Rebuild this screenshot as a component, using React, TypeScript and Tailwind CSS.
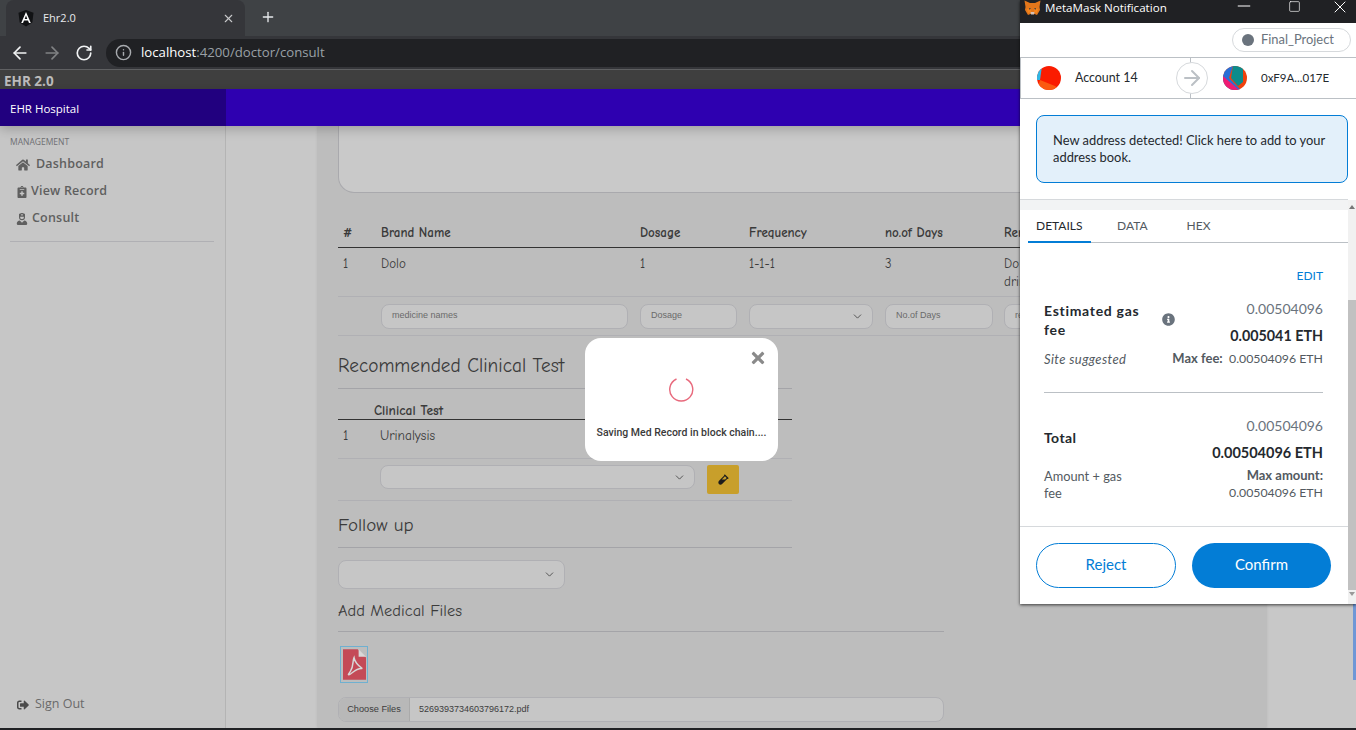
import { ArrowLeft, ArrowRight, ChevronDown, Info, Minus, Plus, RotateCw, Square, X } from 'lucide-react'
import { FaHome, FaInfoCircle, FaNotesMedical, FaSignOutAlt, FaTimes, FaUserNurse, FaVial } from 'react-icons/fa'

const comic = "font-['Comic_Sans_MS','Comic_Neue',cursive]"

function AngularLogo() {
  return (
    <svg width="16" height="17" viewBox="0 0 16 17">
      <path d="M8 0 L15.5 2.7 L14.3 12.6 L8 16.5 L1.7 12.6 L.5 2.7 Z" fill="#111214" />
      <path d="M8 2 L3.2 13 H5 L6 10.4 H10 L11 13 H12.8 Z M6.7 8.9 L8 5.6 L9.3 8.9 Z" fill="#fff" fillRule="evenodd" />
    </svg>
  )
}

function Fox() {
  return (
    <svg width="17" height="16" viewBox="0 0 17 16">
      <path d="M.5 .5 L6 3 H11 L16.5 .5 L15.5 7 L16 10 L13 15 L10.5 14 H6.5 L4 15 L1 10 L1.5 7 Z" fill="#e2761b" />
      <path d="M3 9 L6.5 8 L7 12 L4 13 Z M14 9 L10.5 8 L10 12 L13 13 Z" fill="#f6851b" />
      <path d="M6.5 12 H10.5 L10 14.5 H7 Z" fill="#d7c1b3" />
      <path d="M5 8 L7 8.6 L5.5 9.8 Z M12 8 L10 8.6 L11.5 9.8 Z" fill="#233447" />
    </svg>
  )
}

function FakeSelect({ className }: { className: string }) {
  return (
    <div className={`flex items-center justify-end pr-2 rounded-[8px] border border-[#b0b0b4] bg-[#c6c6c6] ${className}`}>
      <ChevronDown size={13} strokeWidth={1.6} color="#444" />
    </div>
  )
}

function FakeInput({ text }: { text: string }) {
  return (
    <div className="h-[25px] flex items-center pl-[10px] rounded-[8px] border border-[#b0b0b4] bg-[#c6c6c6] text-[9px] text-[#6a6a6a] font-['Liberation_Sans',sans-serif] overflow-hidden">
      {text}
    </div>
  )
}

function Sidebar() {
  const items = [
    { label: 'Dashboard', icon: <FaHome size={14} />, cls: 'gap-[6px]' },
    { label: 'View Record', icon: <FaNotesMedical size={12} />, cls: 'gap-[3px]' },
    { label: 'Consult', icon: <FaUserNurse size={12} />, cls: 'gap-[4px]' },
  ]
  return (
    <aside className="w-[226px] shrink-0 flex flex-col justify-between bg-[#c6c6c6] border-r border-[#b4b4b4] font-['Open_Sans',sans-serif]">
      <div className="pt-[10px]">
        <div className="pl-[10px] text-[8.5px] leading-[12px] text-[#6f6f73]">MANAGEMENT</div>
        <ul className="mt-[3px]">
          {items.map((it) => (
            <li key={it.label} className={`h-[27px] pl-[16px] flex items-center text-[#5f5f5f] text-[12.5px] font-semibold tracking-[0.2px] ${it.cls}`}>
              {it.icon}
              {it.label}
            </li>
          ))}
        </ul>
        <div className="mx-[10px] w-[204px] mt-[9px] border-t border-[#b0b0b4]" />
      </div>
      <div className="pl-[17px] pb-[14px] flex items-center gap-[6px] text-[12.5px] text-[#6a6a6a]">
        <FaSignOutAlt size={12} color="#4a4a4a" />
        Sign Out
      </div>
    </aside>
  )
}

function MedicineTable() {
  const cols = 'grid grid-cols-[43px_259px_109px_136px_119px_1fr]'
  return (
    <div className="mt-[28px] text-[#3b3b3b]">
      <div className={`${cols} h-[27px] pb-[2px] items-center border-b border-[#333] text-[13px] font-bold text-[#3a3a3a] ${comic}`}>
        <div className="pl-[5px] text-[13px]">#</div>
        <div>Brand Name</div>
        <div>Dosage</div>
        <div>Frequency</div>
        <div>no.of Days</div>
        <div>Remarks</div>
      </div>
      <div className={`${cols} h-[49px] pt-[7px] border-b border-[#b0b0b4] text-[13px] leading-[18px] ${comic}`}>
        <div className="pl-[5px]">1</div>
        <div>Dolo</div>
        <div>1</div>
        <div>1-1-1</div>
        <div>3</div>
        <div className="max-w-[110px]">Do not take after drinking</div>
      </div>
      <div className={`${cols} h-[39px] items-center border-b border-[#b0b0b4]`}>
        <div />
        <div className="pr-[12px]"><FakeInput text="medicine names" /></div>
        <div className="pr-[12px]"><FakeInput text="Dosage" /></div>
        <div className="pr-[12px]"><FakeSelect className="h-[25px]" /></div>
        <div className="pr-[11px]"><FakeInput text="No.of Days" /></div>
        <div className="pr-[12px]"><FakeInput text="remarks" /></div>
      </div>
    </div>
  )
}

function ClinicalTests() {
  return (
    <div className="w-[454px] text-[#3b3b3b]">
      <h2 className={`mt-[16px] h-[37px] leading-[28px] text-[19.3px] border-b border-[#a4a4a8] ${comic}`}>Recommended Clinical Test</h2>
      <div className={`h-[31px] pl-[36px] pt-[14px] leading-[16px] text-[13.5px] font-bold border-b border-[#333] ${comic}`}>Clinical Test</div>
      <div className={`h-[39px] flex items-center pb-[6px] border-b border-[#b0b0b4] text-[13.4px] ${comic}`}>
        <span className="w-[42px] pl-[5px]">1</span>
        Urinalysis
      </div>
      <div className="h-[42px] pl-[42px] pt-[6px] flex items-start gap-[12px] border-b border-[#b0b0b4]">
        <FakeSelect className="w-[315px] h-[24px]" />
        <div className="w-[32px] h-[29px] flex items-center justify-center rounded-[2px] bg-[#c89f2b]">
          <FaVial size={11} color="#1c1c1c" />
        </div>
      </div>
      <h2 className={`mt-[8px] h-[39px] leading-[32px] text-[19px] border-b border-[#a4a4a8] ${comic}`}>Follow up</h2>
      <FakeSelect className="mt-[12px] w-[227px] h-[29px]" />
    </div>
  )
}

function MedicalFiles() {
  return (
    <div className="w-[606px] text-[#3b3b3b]">
      <h3 className={`mt-[9px] h-[34px] leading-[26px] text-[16.4px] border-b border-[#a4a4a8] ${comic}`}>Add Medical Files</h3>
      <div className="mt-[14px] ml-[2px] w-[28px] h-[37px] border border-[#6fb0d0] flex items-center justify-center">
        <svg width="23" height="31" viewBox="0 0 25 33">
          <path d="M0 0 H16 L25 9 V33 H0 Z" fill="#c44a57" />
          <path d="M17 0 L25 8 H17 Z" fill="#d8d8d8" />
          <path d="M12 9 C10 13 12 18 8 24 C6 27 5 28 7 27.5 C10 26 15 20 21 21 C17 18 13 15 12 9 Z" fill="none" stroke="#d8d8d8" strokeWidth="1.6" />
        </svg>
      </div>
      <div className="mt-[14px] h-[25px] flex items-center rounded-[8px] border border-[#b0b0b4] bg-[#c6c6c6] overflow-hidden text-[9.2px] font-['Liberation_Sans',sans-serif] text-[#3d3d3d]">
        <div className="h-full w-[71px] flex items-center justify-center bg-[#b8b8b8] border-r border-[#aaa]">Choose Files</div>
        <div className="pl-[9px] text-[9px]">5269393734603796172.pdf</div>
      </div>
    </div>
  )
}

function SavingModal() {
  return (
    <div className="absolute z-20 left-[585px] top-[338px] w-[193px] h-[123px] rounded-[16px] bg-white font-['Roboto',sans-serif]">
      <FaTimes size={18} color="#8a8a8a" className="absolute right-[11px] top-[11px]" />
      <svg className="absolute left-[84px] top-[39px]" width="25" height="25" viewBox="0 0 25 25">
        <path d="M7.5 2 A11.5 11.5 0 1 0 17 2" fill="none" stroke="#e8697c" strokeWidth="1.4" />
      </svg>
      <div className="absolute inset-x-0 top-[88px] text-center text-[10.5px] leading-[14px] font-medium text-[#3a3a3a]">Saving Med Record in block chain....</div>
    </div>
  )
}

function MetaMask() {
  return (
    <div className="absolute z-30 left-[1020px] top-0 w-[336px] h-[604px] flex flex-col bg-white shadow-[0_1px_3px_rgba(0,0,0,.7)] font-['Lato',sans-serif]">
      <div className="h-[23px] shrink-0 flex items-start bg-[#202124] pl-[4px] text-white text-[11.6px] leading-[16px] font-['Open_Sans',sans-serif]">
        <Fox />
        <span className="ml-[4px] w-[120px] whitespace-nowrap">MetaMask Notification</span>
        <Minus size={20} strokeWidth={1.2} className="ml-[69px] -mt-[4px]" />
        <Square size={13} strokeWidth={1.2} className="ml-[34px]" />
        <X size={20} strokeWidth={1.2} className="ml-[29px] -mt-[3px]" />
      </div>
      <div className="flex flex-1 min-h-0">
        <div className="w-[328px] flex flex-col">
          <div className="h-[34px] shrink-0 flex items-center justify-end -mr-[3px]">
            <div className="w-[119px] h-[24px] flex items-center gap-[7px] pl-[9px] rounded-full border border-[#d6d9dc] text-[12.9px] text-[#6a737d] whitespace-nowrap">
              <span className="w-[12px] h-[12px] rounded-full bg-[#6a737d]" />
              Final_Project
            </div>
          </div>
          <div className="relative h-[42px] shrink-0 -mr-[8px] flex border-y border-[#bbc0c5] text-[12.4px] text-[#24292e]">
            <div className="w-[171px] flex items-center gap-[14px] pl-[16px] border-l border-r border-[#bbc0c5]">
              <svg width="24" height="24" viewBox="0 0 24 24">
                <clipPath id="a1"><circle cx="12" cy="12" r="12" /></clipPath>
                <g clipPath="url(#a1)">
                  <rect width="24" height="24" fill="#fa1c00" />
                  <path d="M0 0 H5 L3 14 L0 14 Z" fill="#2fb8e6" />
                  <path d="M3 14 L18 20 L24 24 H0 Z" fill="#fb5a10" />
                </g>
              </svg>
              Account 14
            </div>
            <div className="flex items-center gap-[14px] pl-[32px] text-[11.5px]">
              <svg width="24" height="24" viewBox="0 0 24 24">
                <clipPath id="a2"><circle cx="12" cy="12" r="12" /></clipPath>
                <g clipPath="url(#a2)">
                  <rect width="24" height="24" fill="#f0410c" />
                  <path d="M0 0 H10 L6 12 L18 24 H0 Z" fill="#2a6fd6" />
                  <path d="M0 10 L16 24 H0 Z" fill="#ef1b72" />
                  <path d="M10 0 H20 V16 L15 20 L8 12 Z" fill="#0c8c8c" />
                </g>
              </svg>
              0xF9A...017E
            </div>
            <div className="absolute left-[156px] top-[4px] w-[32px] h-[32px] rounded-full border border-[#d6d9dc] bg-white flex items-center justify-center">
              <ArrowRight size={24} strokeWidth={2} color="#bbc0c5" />
            </div>
          </div>
          <div className="mx-[16px] mr-0 mt-[16px] h-[68px] shrink-0 pl-[16px] pr-[12px] pt-[16px] rounded-[8px] border border-[#037dd6] bg-[#e3f0fa] text-[12.9px] leading-[17px] text-[#24292e]">
            New address detected! Click here to add to your address book.
          </div>
          <div className="mt-[16px] h-[11px] shrink-0 border-t border-[#d6d9dc] bg-[#f2f3f4]" />
          <div className="h-[33px] shrink-0 ml-[8px] flex border-b border-[#bbc0c5] text-[12px] text-[#535a61]">
            <div className="w-[63px] pl-[8px] pt-[7px] text-[#24292e] border-b-2 border-[#037dd6] h-[33px]">DETAILS</div>
            <div className="ml-[26px] pt-[7px]">DATA</div>
            <div className="ml-[39px] pt-[7px]">HEX</div>
          </div>
          <div className="pl-[24px] pr-[25px] pt-[25px] flex-1">
            <div className="text-right text-[12px] leading-[16px] text-[#037dd6]">EDIT</div>
            <div className="mt-[17px] h-[92px] border-b border-[#bbc0c5] flex justify-between">
              <div className="w-[124px] relative">
                <div className="text-[14px] font-bold tracking-[0.7px] leading-[19px] text-[#24292e]">Estimated gas<br />fee</div>
                <div className="mt-[11px] text-[13px] tracking-[0.4px] italic text-[#535a61]">Site suggested</div>
                <FaInfoCircle size={13} color="#6a737d" className="absolute left-[118px] top-[12px]" />
              </div>
              <div className="text-right">
                <div className="text-[14px] leading-[16px] text-[#6a737d]">0.00504096</div>
                <div className="mt-[10px] text-[14.3px] leading-[18px] font-bold text-[#24292e]">0.005041 ETH</div>
                <div className="mt-[5px] text-[12.3px] leading-[16px] text-[#535a61]"><b className="text-[13px]">Max fee:</b>&nbsp; 0.00504096 ETH</div>
              </div>
            </div>
            <div className="mt-[25px] flex justify-between">
              <div className="w-[90px]">
                <div className="mt-[11px] text-[14px] font-bold tracking-[0.4px] leading-[18px] text-[#24292e]">Total</div>
                <div className="mt-[21px] text-[12.8px] leading-[17px] text-[#535a61]">Amount + gas fee</div>
              </div>
              <div className="text-right">
                <div className="text-[14px] leading-[16px] text-[#6a737d]">0.00504096</div>
                <div className="mt-[10px] text-[14.5px] leading-[18px] font-bold text-[#24292e]">0.00504096 ETH</div>
                <div className="mt-[5px] text-[12.3px] leading-[17px] text-[#535a61]"><b className="text-[13px]">Max amount:</b><br />0.00504096 ETH</div>
              </div>
            </div>
          </div>
          <div className="h-[78px] shrink-0 border-t border-[#d6d9dc] pl-[16px] pt-[16px] flex gap-[16px] text-[15px]">
            <div className="w-[140px] h-[45px] pb-[2px] flex items-center justify-center rounded-full border border-[#037dd6] text-[#037dd6]">Reject</div>
            <div className="w-[139px] h-[45px] pb-[2px] flex items-center justify-center rounded-full bg-[#037dd6] text-white">Confirm</div>
          </div>
        </div>
        <div className="w-[8px] flex flex-col">
          <div className="h-[177px] shrink-0" />
          <div className="flex-1 flex flex-col bg-[#f1f1f1]">
            <div className="h-[100px] shrink-0 pt-[5px] pl-[1px]">
              <div className="w-0 h-0 border-x-[3px] border-x-transparent border-b-[4px] border-b-[#777]" />
            </div>
            <div className="h-[290px] shrink-0 bg-[#c1c1c1]" />
            <div className="pt-[2px] pl-[1px]">
              <div className="w-0 h-0 border-x-[3px] border-x-transparent border-t-[4px] border-t-[#999]" />
            </div>
          </div>
        </div>
      </div>
    </div>
  )
}

export default function App() {
  return (
    <div className="relative w-[1356px] h-[730px] overflow-hidden flex flex-col bg-[#c8c8c8]">
      {/* browser chrome */}
      <div className="h-[36px] shrink-0 bg-[#3f4245] flex items-start">
        <div className="ml-[6px] w-[239px] h-[36px] rounded-t-[8px] bg-[#35363a] flex items-center pl-[12px] pr-[10px] text-[11px] text-[#e8eaed] font-['Open_Sans',sans-serif]">
          <AngularLogo />
          <span className="ml-[9px] flex-1">Ehr2.0</span>
          <X size={13} strokeWidth={2} color="#c8c9cb" />
        </div>
        <Plus size={16} strokeWidth={2} color="#e8eaed" className="ml-[15px] mt-[9px]" />
      </div>
      <div className="h-[34px] shrink-0 bg-[#35363a] flex items-center pl-[10px] border-b border-[#5f6062]">
        <ArrowLeft size={20} strokeWidth={2} color="#f1f3f4" />
        <ArrowRight size={20} strokeWidth={2} color="#808284" className="ml-[12px]" />
        <RotateCw size={18} strokeWidth={2.2} color="#f1f3f4" className="ml-[13px]" />
        <div className="ml-[13px] flex-1 h-[28px] rounded-l-full bg-[#202124] flex items-center pl-[9px] text-[13.2px] text-[#9aa0a6] font-['Open_Sans',sans-serif]">
          <Info size={17} strokeWidth={2} color="#a8abaf" />
          <span className="ml-[9px]"><span className="text-white">localhost</span>:4200/doctor/consult</span>
        </div>
      </div>
      <div className="h-[19px] shrink-0 bg-[#3f3f3f] pl-[4px] pt-[2px] text-[13.5px] leading-[18px] font-bold text-[#bcbcbc] font-['Open_Sans',sans-serif]">EHR 2.0</div>
      <header className="relative z-10 h-[37px] shrink-0 flex bg-[#2e00b0] shadow-[0_3px_12px_rgba(0,0,0,.22)] font-['Open_Sans',sans-serif]">
        <div className="w-[226px] pl-[10px] pt-[2px] flex items-center text-[11.5px] text-white bg-[#21007f]">EHR Hospital</div>
      </header>
      <div className="flex flex-1 min-h-0">
        <Sidebar />
        <div className="w-[92px] shrink-0 bg-[#c8c8c8]" />
        <main className="w-[948px] shrink-0 bg-[#bdbdbd] px-[20px] overflow-hidden shadow-[0_0_3px_rgba(0,0,0,.15)]">
          <div className="h-[67px] rounded-b-[16px] border border-t-0 border-[#a9a9ad] bg-[#c9c9c9]" />
          <MedicineTable />
          <ClinicalTests />
          <MedicalFiles />
        </main>
        <div className="flex-1 flex justify-end">
          <div className="w-[3px] h-[76px] mt-[478px] bg-[#6f97d6]" />
        </div>
      </div>
      <div className="h-[2px] shrink-0 bg-[#202124]" />
      <SavingModal />
      <MetaMask />
    </div>
  )
}
